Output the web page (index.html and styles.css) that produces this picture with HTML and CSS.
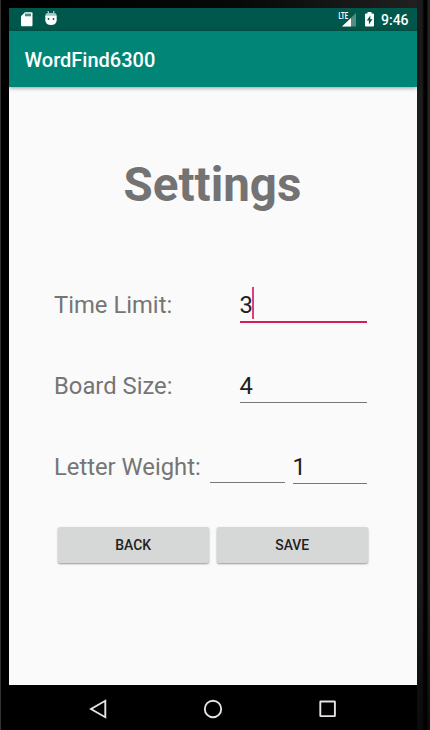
FILE: index.html
```
<!DOCTYPE html>
<html lang="en">
<head>
<meta charset="utf-8">
<title>WordFind6300</title>
<link rel="stylesheet" href="styles.css">
</head>
<body>
<div class="device">
  <div class="screen">
    <div class="status-bar">
      <svg class="sd" width="12" height="15" viewBox="0 0 12 15"><path fill="#fff" d="M4 0.3h6.500q1 0 1 1v12q0 1-1 1h-9.500q-1 0-1-1v-9z"/><path fill="#00574b" fill-opacity=".7" d="M4 1.600h6v2.700H4z"/></svg>
      <svg class="bot" width="12" height="15" viewBox="0 0 12 15"><path stroke="#fff" stroke-opacity=".85" stroke-width="1" d="M3 0l.7 3M9 0l-.7 3"/><path fill="#fff" d="M.3 5.200Q.3 2 3.500 2h5Q11.700 2 11.700 5.200V9.500Q11 14 6 14T.3 9.500z"/><path fill="#00574b" fill-opacity=".35" d="M.3 4.800h11.400V3.500L9 2H3L.3 3.500z"/><circle cx="3.500" cy="8" r=".9" fill="#00574b"/><circle cx="8.500" cy="8" r=".9" fill="#00574b"/></svg>
      <svg class="signal" width="19" height="16" viewBox="0 0 19 16"><path fill="#fff" fill-opacity=".32" d="M18 2v13.500H4z"/><path fill="#fff" d="M13 7V15.500H4z"/><path fill="#00574b" d="M0 0h10.500v8.700H0z"/><text x="0.500" y="8" textLength="9.500" lengthAdjust="spacingAndGlyphs">LTE</text></svg>
      <svg class="battery" width="9" height="15" viewBox="0 0 9 15"><path fill="#fff" d="M2.500 0h4v1.400H8q1 0 1 1V13.500q0 1-1 1H1q-1 0-1-1V2.400q0-1 1-1h1.500z"/><path fill="#00574b" d="M5.300 3.500L1.800 8.600h2.100v3.900l3.500-5.300H5.300z"/></svg>
      <span class="clock">9:46</span>
    </div>
    <header class="app-bar">WordFind6300</header>
    <main class="content">
      <h1>Settings</h1>
      <div class="row"><label>Time Limit:</label><div class="field focused">3<i class="caret"></i></div></div>
      <div class="row"><label>Board Size:</label><div class="field">4</div></div>
      <div class="row weights"><label>Letter Weight:</label><div class="field blank"></div><div class="field last">1</div></div>
      <div class="buttons"><button>BACK</button><button>SAVE</button></div>
    </main>
    <nav class="nav-bar">
      <svg width="20" height="20" viewBox="0 0 20 20"><path d="M17.300 1.800v16.400L3 10z"/></svg>
      <svg width="20" height="20" viewBox="0 0 20 20"><circle cx="10" cy="10" r="8.200"/></svg>
      <svg width="20" height="20" viewBox="0 0 20 20"><rect x="2.300" y="2.500" width="14.600" height="14.600" rx=".4"/></svg>
    </nav>
  </div>
  <div class="edge"></div>
</div>
</body>
</html>
```
FILE: styles.css
```
* { box-sizing: border-box; }
body { margin: 0; font-family: Roboto, sans-serif; background: #000; }
.device {
  width: 430px; height: 730px; overflow: hidden;
  display: flex; padding: 8px 0 0 8px;
  border-left: 1px solid #333;
  background: linear-gradient(90deg, #000, #080808 55%, #222) top / 100% 8px no-repeat, #000;
}
.screen { width: 408px; flex: none; display: flex; flex-direction: column; }
.edge {
  width: 13px; margin-top: -8px; height: 730px;
  background: linear-gradient(180deg, transparent 80%, rgba(0,0,0,.65)), linear-gradient(90deg, #1c1c1c 0 5px, #111 6px, #000 7px 10px, #252423 11px);
}
.status-bar { height: 23px; background: #00574b; display: flex; align-items: flex-start; color: #fff; }
.status-bar svg { flex: none; }
.sd { margin: 4px 0 0 12px; }
.bot { margin: 3px 0 0 12px; }
.signal { margin: 3px 0 0 auto; }
.signal text { font: bold 9px Roboto, sans-serif; fill: #fff; }
.battery { margin: 4px 0 0 8px; }
.clock { width: 28px; margin: 4px 8px 0 7px; font-size: 14px; font-weight: 500; line-height: 17px; white-space: nowrap; }
.app-bar {
  height: 56px; flex: none; padding-left: 15.500px; background: #008577; color: #fff;
  font-size: 20px; font-weight: 500; line-height: 59px;
  box-shadow: 0 1px 4px rgba(0,0,0,.4); z-index: 1;
}
.content { height: 598px; flex: none; background: #fafafa; padding: 0 49px 0 45px; overflow: hidden; }
h1 { margin: 68px 0 0; height: 60px; line-height: 60px; font-size: 47.500px; font-weight: 700; color: #737373; text-align: center; white-space: nowrap; padding-left: 3px; }
.row { display: flex; height: 40px; margin-top: 41px; font-size: 23.800px; line-height: 44px; }
.row:nth-of-type(1) { margin-top: 68px; }
label { width: 185.500px; flex: none; color: #757575; white-space: nowrap; }
.field { position: relative; width: 127.500px; height: 39px; border-bottom: 1px solid #777; color: #212121; }
.field.focused { height: 40px; border-bottom: 2px solid #d81b60; }
.caret { position: absolute; left: 12.500px; top: 4px; width: 2px; height: 32px; background: #dd4078; }
.weights label { width: 156px; }
.weights .field { width: 74.500px; }
.weights .blank { height: 38px; }
.weights .last { margin-left: 8px; }
.buttons { display: flex; gap: 8px; margin: 42px .3px 0 3.700px; }
button {
  flex: 1; height: 36px; padding: 0; border: 0; border-radius: 2px; background: #d6d8d7;
  color: #212121; font: 500 13.900px/36px Roboto, sans-serif;
  box-shadow: 0 1px 2px rgba(0,0,0,.4);
}
.nav-bar { height: 45px; flex: none; background: #000; display: flex; gap: 95px; padding: 14px 0 0 79px; }
.nav-bar svg { fill: none; stroke: #e4e4e4; stroke-width: 1.900; }
```
